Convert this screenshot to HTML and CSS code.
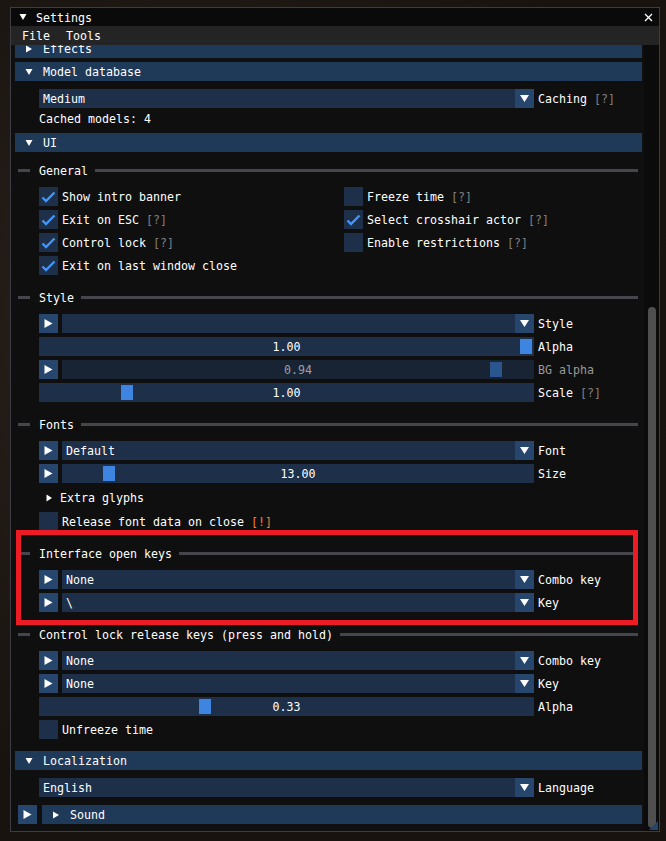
FILE: index.html
```html
<!DOCTYPE html>
<html>
<head>
<meta charset="utf-8">
<link rel="stylesheet" href="styles.css">
</head>
<body>
<div class="window">
  <div class="titlebar">
    <svg class="t-arrow" width="8" height="8" viewBox="0 0 8 8"><polygon points="0.5,1 7.5,1 4,7" fill="#fff"/></svg>
    <span class="title">Settings</span>
    <svg class="close" width="9" height="9" viewBox="0 0 9 9"><path d="M1 1 L8 8 M8 1 L1 8" stroke="#fff" stroke-width="1.3"/></svg>
  </div>
  <div class="menubar"><span class="menu">File</span><span class="menu">Tools</span></div>
  <div class="main">
    <div class="content">
      <div class="header first"><svg class="harrow" width="8" height="8" viewBox="0 0 8 8"><polygon points="1,0.5 1,7.5 7,4" fill="#fff"/></svg><span class="ht">Effects</span></div>
      <div class="header m4"><svg class="harrow" width="8" height="8" viewBox="0 0 8 8"><polygon points="0.5,1 7.5,1 4,7" fill="#fff"/></svg><span class="ht">Model database</span></div>
      <div class="indent">
        <div class="row m8">
          <div class="combo w495"><span class="val">Medium</span><span class="carrow"><svg width="19" height="19" viewBox="0 0 19 19"><polygon points="5,6 14,6 9.5,13" fill="#fff"/></svg></span></div>
          <span class="label">Caching <span class="dim">[?]</span></span>
        </div>
        <div class="text m4">Cached models: 4</div>
      </div>
      <div class="header m8"><svg class="harrow" width="8" height="8" viewBox="0 0 8 8"><polygon points="0.5,1 7.5,1 4,7" fill="#fff"/></svg><span class="ht">UI</span></div>

      <div class="sep m12"><span class="sl"></span><span class="st">General</span><span class="sr"></span></div>
      <div class="indent">
        <div class="grid2 m10">
          <div class="cbrow"><span class="cb"><svg width="19" height="19" viewBox="0 0 19 19"><polyline points="3.5,10.5 7,14 15.5,5.5" fill="none" stroke="#4296fa" stroke-width="2.4"/></svg></span><span class="ct">Show intro banner</span></div>
          <div class="cbrow"><span class="cb"></span><span class="ct">Freeze time <span class="dim">[?]</span></span></div>
          <div class="cbrow"><span class="cb"><svg width="19" height="19" viewBox="0 0 19 19"><polyline points="3.5,10.5 7,14 15.5,5.5" fill="none" stroke="#4296fa" stroke-width="2.4"/></svg></span><span class="ct">Exit on ESC <span class="dim">[?]</span></span></div>
          <div class="cbrow"><span class="cb"><svg width="19" height="19" viewBox="0 0 19 19"><polyline points="3.5,10.5 7,14 15.5,5.5" fill="none" stroke="#4296fa" stroke-width="2.4"/></svg></span><span class="ct">Select crosshair actor <span class="dim">[?]</span></span></div>
          <div class="cbrow"><span class="cb"><svg width="19" height="19" viewBox="0 0 19 19"><polyline points="3.5,10.5 7,14 15.5,5.5" fill="none" stroke="#4296fa" stroke-width="2.4"/></svg></span><span class="ct">Control lock <span class="dim">[?]</span></span></div>
          <div class="cbrow"><span class="cb"></span><span class="ct">Enable restrictions <span class="dim">[?]</span></span></div>
          <div class="cbrow"><span class="cb"><svg width="19" height="19" viewBox="0 0 19 19"><polyline points="3.5,10.5 7,14 15.5,5.5" fill="none" stroke="#4296fa" stroke-width="2.4"/></svg></span><span class="ct">Exit on last window close</span></div>
        </div>
      </div>

      <div class="sep m16"><span class="sl"></span><span class="st">Style</span><span class="sr"></span></div>
      <div class="indent">
        <div class="row m10">
          <span class="abtn"><svg width="19" height="19" viewBox="0 0 19 19"><polygon points="5.5,5 5.5,14 13.5,9.5" fill="#fff"/></svg></span>
          <div class="combo w472"><span class="val"></span><span class="carrow"><svg width="19" height="19" viewBox="0 0 19 19"><polygon points="5,6 14,6 9.5,13" fill="#fff"/></svg></span></div>
          <span class="label">Style</span>
        </div>
        <div class="row m4">
          <div class="slider w495"><span class="grab" style="left:481px"></span><span class="sval">1.00</span></div>
          <span class="label">Alpha</span>
        </div>
        <div class="row m4">
          <span class="abtn"><svg width="19" height="19" viewBox="0 0 19 19"><polygon points="5.5,5 5.5,14 13.5,9.5" fill="#fff"/></svg></span>
          <div class="slider w472 disabled"><span class="grab" style="left:428px"></span><span class="sval">0.94</span></div>
          <span class="label dis">BG alpha</span>
        </div>
        <div class="row m4">
          <div class="slider w495"><span class="grab" style="left:82px"></span><span class="sval">1.00</span></div>
          <span class="label">Scale <span class="dim">[?]</span></span>
        </div>
      </div>

      <div class="sep m16"><span class="sl"></span><span class="st">Fonts</span><span class="sr"></span></div>
      <div class="indent">
        <div class="row m10">
          <span class="abtn"><svg width="19" height="19" viewBox="0 0 19 19"><polygon points="5.5,5 5.5,14 13.5,9.5" fill="#fff"/></svg></span>
          <div class="combo w472"><span class="val">Default</span><span class="carrow"><svg width="19" height="19" viewBox="0 0 19 19"><polygon points="5,6 14,6 9.5,13" fill="#fff"/></svg></span></div>
          <span class="label">Font</span>
        </div>
        <div class="row m4">
          <span class="abtn"><svg width="19" height="19" viewBox="0 0 19 19"><polygon points="5.5,5 5.5,14 13.5,9.5" fill="#fff"/></svg></span>
          <div class="slider w472"><span class="grab" style="left:41px"></span><span class="sval">13.00</span></div>
          <span class="label">Size</span>
        </div>
        <div class="tree m4"><svg class="tarrow" width="7" height="8" viewBox="0 0 7 8"><polygon points="0.5,0.5 0.5,7.5 6,4" fill="#fff"/></svg><span class="ct">Extra glyphs</span></div>
        <div class="cbrow m4"><span class="cb"></span><span class="ct">Release font data on close <span class="warn">[!]</span></span></div>
      </div>

      <div class="sep m16"><span class="sl"></span><span class="st">Interface open keys</span><span class="sr"></span></div>
      <div class="indent">
        <div class="row m10">
          <span class="abtn"><svg width="19" height="19" viewBox="0 0 19 19"><polygon points="5.5,5 5.5,14 13.5,9.5" fill="#fff"/></svg></span>
          <div class="combo w472"><span class="val">None</span><span class="carrow"><svg width="19" height="19" viewBox="0 0 19 19"><polygon points="5,6 14,6 9.5,13" fill="#fff"/></svg></span></div>
          <span class="label">Combo key</span>
        </div>
        <div class="row m4">
          <span class="abtn"><svg width="19" height="19" viewBox="0 0 19 19"><polygon points="5.5,5 5.5,14 13.5,9.5" fill="#fff"/></svg></span>
          <div class="combo w472"><span class="val">\</span><span class="carrow"><svg width="19" height="19" viewBox="0 0 19 19"><polygon points="5,6 14,6 9.5,13" fill="#fff"/></svg></span></div>
          <span class="label">Key</span>
        </div>
      </div>

      <div class="sep m16"><span class="sl"></span><span class="st">Control lock release keys (press and hold)</span><span class="sr"></span></div>
      <div class="indent">
        <div class="row m10">
          <span class="abtn"><svg width="19" height="19" viewBox="0 0 19 19"><polygon points="5.5,5 5.5,14 13.5,9.5" fill="#fff"/></svg></span>
          <div class="combo w472"><span class="val">None</span><span class="carrow"><svg width="19" height="19" viewBox="0 0 19 19"><polygon points="5,6 14,6 9.5,13" fill="#fff"/></svg></span></div>
          <span class="label">Combo key</span>
        </div>
        <div class="row m4">
          <span class="abtn"><svg width="19" height="19" viewBox="0 0 19 19"><polygon points="5.5,5 5.5,14 13.5,9.5" fill="#fff"/></svg></span>
          <div class="combo w472"><span class="val">None</span><span class="carrow"><svg width="19" height="19" viewBox="0 0 19 19"><polygon points="5,6 14,6 9.5,13" fill="#fff"/></svg></span></div>
          <span class="label">Key</span>
        </div>
        <div class="row m4">
          <div class="slider w495"><span class="grab" style="left:160px"></span><span class="sval">0.33</span></div>
          <span class="label">Alpha</span>
        </div>
        <div class="cbrow m4"><span class="cb"></span><span class="ct">Unfreeze time</span></div>
      </div>

      <div class="header m12"><svg class="harrow" width="8" height="8" viewBox="0 0 8 8"><polygon points="0.5,1 7.5,1 4,7" fill="#fff"/></svg><span class="ht">Localization</span></div>
      <div class="indent">
        <div class="row m8">
          <div class="combo w495"><span class="val">English</span><span class="carrow"><svg width="19" height="19" viewBox="0 0 19 19"><polygon points="5,6 14,6 9.5,13" fill="#fff"/></svg></span></div>
          <span class="label">Language</span>
        </div>
      </div>
      <div class="soundrow m8">
        <span class="abtn"><svg width="19" height="19" viewBox="0 0 19 19"><polygon points="5.5,5 5.5,14 13.5,9.5" fill="#fff"/></svg></span>
        <div class="header sound"><svg class="harrow" width="8" height="8" viewBox="0 0 8 8"><polygon points="1,0.5 1,7.5 7,4" fill="#fff"/></svg><span class="ht">Sound</span></div>
      </div>
    </div>
    <div class="scrollbar"><div class="sgrab"></div></div>
  </div>
  <svg class="grip" width="9" height="9" viewBox="0 0 9 9"><polygon points="9,0 9,9 0,9" fill="#24456d"/></svg>
</div>
<div class="annot"></div>
</body>
</html>
```

FILE: styles.css
```css
html, body {
  margin: 0;
  padding: 0;
}
body {
  width: 666px;
  height: 841px;
  overflow: hidden;
  background: #1c1714;
  background-image: radial-gradient(circle at 30% 40%, #2a211c 0%, #18130f 70%);
  font-family: "DejaVu Sans Mono", "Liberation Mono", monospace;
  font-size: 11.63px;
  color: #ffffff;
  position: relative;
}
.window {
  position: relative;
  margin-left: 10px;
  margin-top: 7px;
  width: 650px;
  height: 825px;
  box-sizing: border-box;
  border: 1px solid #3c3c44;
  background: #0f0f0f;
  display: flex;
  flex-direction: column;
}
.titlebar {
  height: 18px;
  background: #0a0a0a;
  display: flex;
  align-items: center;
  line-height: 18px;
  flex: none;
}
.t-arrow { margin-left: 8px; }
.title { margin-left: 9px; flex: 1; }
.close { margin-right: 6px; }
.menubar {
  height: 19px;
  background: #242424;
  display: flex;
  line-height: 19px;
  flex: none;
}
.menu { margin-left: 11px; }
.menu + .menu { margin-left: 16px; }

/* one-pixel baseline nudge to match the bitmap font */
.title, .menu, .ht, .val, .label, .sval, .st, .ct, .text {
  position: relative;
  top: 1px;
}

.main {
  flex: 1;
  display: flex;
  min-height: 0;
}
.content {
  width: 633px;
  overflow: hidden;
  flex: none;
}
.scrollbar {
  width: 15px;
  background: #0b0b0b;
  flex: none;
}
.sgrab {
  margin-left: 4px;
  margin-top: 262px;
  width: 8px;
  height: 521px;
  border-radius: 4px;
  background: #4f4f4f;
}
.grip {
  position: absolute;
  right: 1px;
  bottom: 1px;
}
.m4 { margin-top: 4px; }
.m8 { margin-top: 8px; }
.m10 { margin-top: 10px; }
.m12 { margin-top: 12px; }
.m16 { margin-top: 16px; }

.header {
  margin-left: 4px;
  width: 627px;
  height: 19px;
  background: #1f3958;
  display: flex;
  align-items: center;
  line-height: 19px;
}
.header.first { margin-top: -6px; }
.harrow { margin-left: 10px; margin-right: 10px; flex: none; }
.indent { padding-left: 28px; }
.row {
  display: flex;
  align-items: center;
  gap: 4px;
  height: 19px;
  line-height: 19px;
}
.combo {
  display: flex;
  height: 19px;
  background: #1d2f49;
}
.w495 { width: 495px; }
.w472 { width: 472px; }
.val { flex: 1; padding-left: 4px; white-space: pre; }
.carrow {
  width: 19px;
  height: 19px;
  background: #26466e;
  display: block;
}
.carrow svg, .abtn svg, .cb svg { display: block; }
.abtn {
  width: 19px;
  height: 19px;
  background: #26466e;
  flex: none;
}
.label { white-space: pre; }
.label.dis { color: #9a9a9a; }
.dim { color: #808080; }
.warn { color: #f07d3c; }
.text { height: 13px; line-height: 13px; }
.slider {
  position: relative;
  height: 19px;
  background: #1d2f49;
  text-align: center;
}
.slider.disabled { background: #182333; color: #9aa0a8; }
.grab {
  position: absolute;
  top: 2px;
  width: 12px;
  height: 15px;
  background: #3d85e0;
}
.slider.disabled .grab { background: #2b568d; }
.sep {
  height: 13px;
  display: flex;
  align-items: center;
  line-height: 13px;
  padding-left: 7px;
}
.sl {
  width: 12px;
  height: 3px;
  background: #45454d;
}
.st { margin-left: 9px; margin-right: 7px; white-space: pre; }
.sr {
  width: 0;
  flex: 1;
  height: 3px;
  background: #45454d;
  margin-right: 6px;
}
.grid2 {
  display: grid;
  grid-template-columns: 305px auto;
  grid-auto-rows: 19px;
  row-gap: 4px;
}
.cbrow {
  display: flex;
  align-items: center;
  gap: 4px;
  height: 19px;
  line-height: 19px;
}
.cb {
  width: 19px;
  height: 19px;
  background: #1d2f49;
  flex: none;
}
.tree {
  height: 21px;
  display: flex;
  align-items: center;
  line-height: 21px;
}
.tarrow { margin-left: 7px; margin-right: 7px; }
.soundrow {
  display: flex;
  align-items: center;
  padding-left: 7px;
  height: 19px;
}
.header.sound {
  margin-left: 5px;
  width: 600px;
}
.annot {
  position: absolute;
  left: 16px;
  top: 530px;
  width: 622px;
  height: 95px;
  box-sizing: border-box;
  border: 5px solid #ed1c24;
}
```
